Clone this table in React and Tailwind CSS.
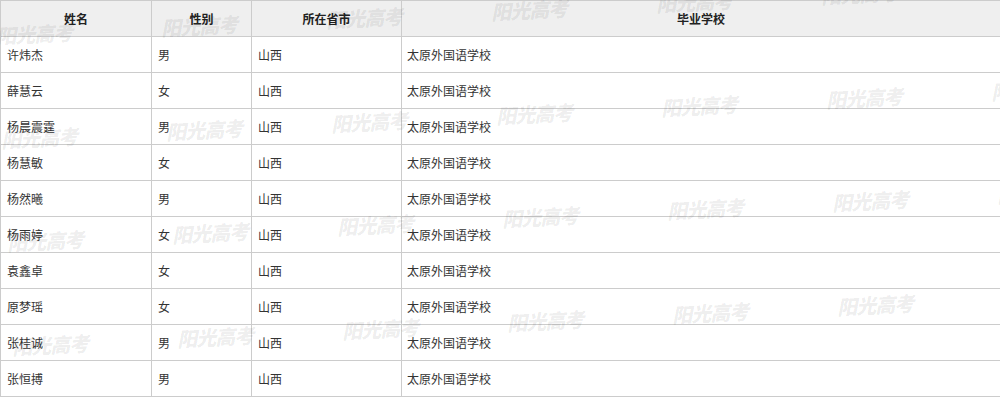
import React from "react";

const students = [
  { name: "许炜杰", gender: "男" },
  { name: "薛慧云", gender: "女" },
  { name: "杨晨震霆", gender: "男" },
  { name: "杨慧敏", gender: "女" },
  { name: "杨然曦", gender: "男" },
  { name: "杨雨婷", gender: "女" },
  { name: "袁鑫卓", gender: "女" },
  { name: "原梦瑶", gender: "女" },
  { name: "张桂诚", gender: "男" },
  { name: "张恒搏", gender: "男" },
];

// watermark grid, slightly tilted
const marks = [];
for (let r = 0; r < 4; r++) {
  for (let c = 0; c < 7; c++) {
    marks.push({ key: `${r}-${c}`, left: -4 + 165 * c + 5.3 * r, top: 24 + 103.5 * r - 8 * c });
  }
}

export default function App() {
  return (
    <div className="relative w-[1000px] h-[411px] overflow-hidden bg-white font-['Noto_Sans_CJK_SC',sans-serif]">
      <table className="w-[1000px] table-fixed border-collapse text-[12px] text-[#333]">
        <colgroup>
          <col className="w-[151px]" />
          <col className="w-[100px]" />
          <col className="w-[150px]" />
          <col className="w-[599px]" />
        </colgroup>
        <thead>
          <tr className="h-9 bg-[#efefef]">
            <th className="border border-[#cccccc] font-bold text-center text-[#222]">姓名</th>
            <th className="border border-[#cccccc] font-bold text-center text-[#222]">性别</th>
            <th className="border border-[#cccccc] font-bold text-center text-[#222]">所在省市</th>
            <th className="border border-[#cccccc] font-bold text-center text-[#222]">毕业学校</th>
          </tr>
        </thead>
        <tbody>
          {students.map((s) => (
            <tr key={s.name} className="h-9">
              <td className="border border-[#cccccc] px-[6px]">{s.name}</td>
              <td className="border border-[#cccccc] px-[6px]">{s.gender}</td>
              <td className="border border-[#cccccc] px-[6px]">山西</td>
              <td className="border border-[#cccccc] px-[5px]">太原外国语学校</td>
            </tr>
          ))}
        </tbody>
      </table>

      {/* watermark */}
      <div className="pointer-events-none absolute inset-0">
        {marks.map((m) => (
          <span
            key={m.key}
            className="absolute whitespace-nowrap text-[20px] leading-[20px] font-black italic tracking-[-1px] text-black/[0.08] -rotate-3"
            style={{ left: m.left, top: m.top }}
          >
            阳光高考
          </span>
        ))}
      </div>
    </div>
  );
}
